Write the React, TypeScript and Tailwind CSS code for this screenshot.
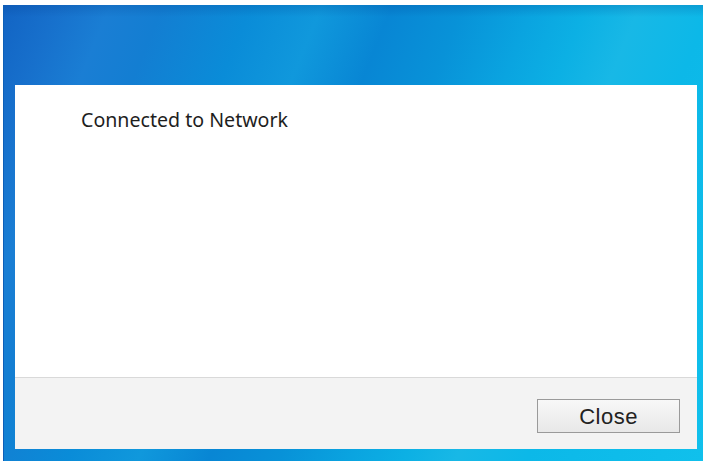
export default function App() {
  return (
    <div className="w-[709px] h-[464px] bg-white pt-[5px] pl-[3px] pr-[6px] pb-[3px] font-['Noto_Sans',sans-serif]">
      <div className="flex h-full flex-col border-l border-[#0d5fb8] bg-[linear-gradient(180deg,rgba(0,60,140,0.22)_0px,rgba(0,0,0,0)_12px),linear-gradient(112deg,#1264c4_0%,#1770cc_6%,#1a7ed4_12%,#137ed2_18%,#0a8cd8_28%,#1098dc_36%,#0886d4_44%,#0892d8_52%,#0aa4e0_60%,#0cb0e4_66%,#18b8e6_72%,#0cb8e8_80%,#10c0ec_100%)] pt-[80px] pl-[11px] pr-[6px] pb-[12px]">
        <div className="flex flex-1 flex-col bg-white">
          <div className="flex-1 pl-[66px] pt-[22px]">
            <p className="text-[19.6px] leading-[26px] text-[#1e1e1e]">Connected to Network</p>
          </div>
          <div className="flex h-[72px] justify-end border-t border-[#d9d9d9] bg-[#f3f3f3] pr-[17px] pt-[21px]">
            <button className="h-[34px] w-[143px] border border-[#9a9a9a] bg-[linear-gradient(180deg,#f8f8f8,#e8e8e8)] font-['Liberation_Sans',sans-serif] text-[22px] tracking-[0.5px] text-[#222]">
              Close
            </button>
          </div>
        </div>
      </div>
    </div>
  );
}
